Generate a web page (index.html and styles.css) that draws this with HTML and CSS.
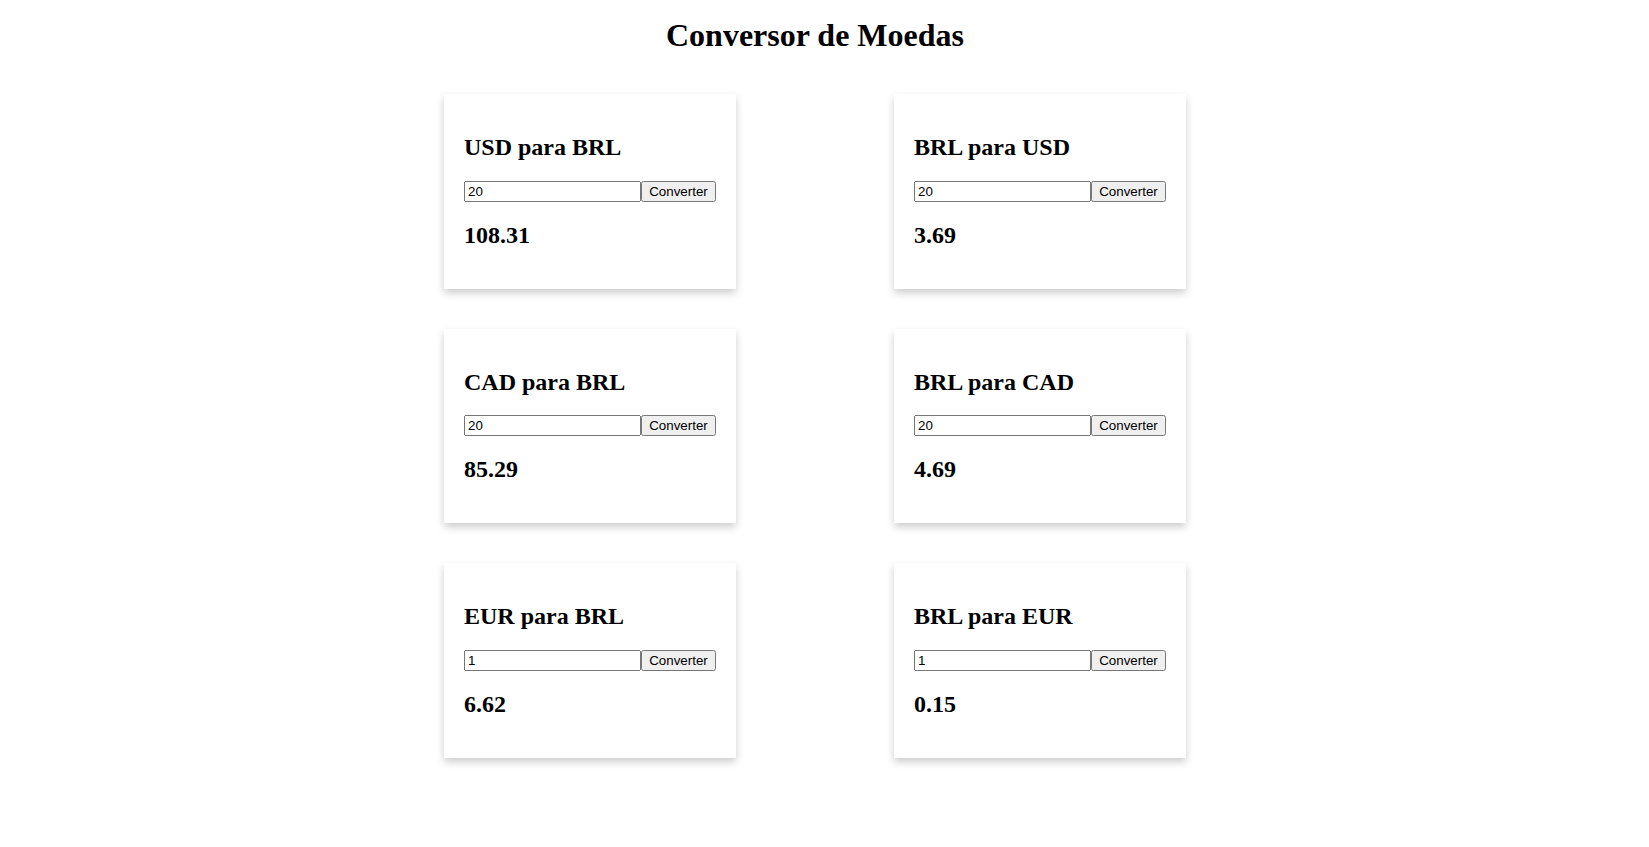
FILE: index.html
```html
<!DOCTYPE html>
<html lang="pt-BR">
<head>
<meta charset="utf-8">
<title>Conversor de Moedas</title>
<link rel="stylesheet" href="styles.css">
</head>
<body>
<h1 class="title">Conversor de Moedas</h1>
<div class="grid">
  <div class="card">
    <h2 class="card-title">USD para BRL</h2>
    <div class="row"><input class="amount" type="text" value="20"><button class="btn">Converter</button></div>
    <h2 class="result">108.31</h2>
  </div>
  <div class="card">
    <h2 class="card-title">BRL para USD</h2>
    <div class="row"><input class="amount" type="text" value="20"><button class="btn">Converter</button></div>
    <h2 class="result">3.69</h2>
  </div>
  <div class="card">
    <h2 class="card-title">CAD para BRL</h2>
    <div class="row"><input class="amount" type="text" value="20"><button class="btn">Converter</button></div>
    <h2 class="result">85.29</h2>
  </div>
  <div class="card">
    <h2 class="card-title">BRL para CAD</h2>
    <div class="row"><input class="amount" type="text" value="20"><button class="btn">Converter</button></div>
    <h2 class="result">4.69</h2>
  </div>
  <div class="card">
    <h2 class="card-title">EUR para BRL</h2>
    <div class="row"><input class="amount" type="text" value="1"><button class="btn">Converter</button></div>
    <h2 class="result">6.62</h2>
  </div>
  <div class="card">
    <h2 class="card-title">BRL para EUR</h2>
    <div class="row"><input class="amount" type="text" value="1"><button class="btn">Converter</button></div>
    <h2 class="result">0.15</h2>
  </div>
</div>
</body>
</html>
```
FILE: styles.css
```css
html, body {
  background: #fff;
}
body {
  margin: 0 19px 0 0;
  font-family: "Liberation Serif", "Times New Roman", serif;
  color: #000;
}
.title {
  font-size: 32px;
  font-weight: bold;
  text-align: center;
  margin: 17px 0 0;
}
.grid {
  display: grid;
  grid-template-columns: 292px 292px;
  column-gap: 158px;
  row-gap: 40px;
  justify-content: center;
  margin-top: 40px;
  padding-bottom: 40px;
}
.card {
  background: #fff;
  padding: 20px;
  box-shadow: 0 4px 8px 0 rgba(0, 0, 0, 0.2);
}
.card-title, .result {
  font-size: 24px;
  font-weight: bold;
  margin: 19.92px 0;
}
.row {
  display: flex;
  align-items: stretch;
}
.amount {
  font-family: "Liberation Sans", Arial, sans-serif;
  font-size: 13.333px;
  width: 177px;
  box-sizing: border-box;
  height: 21px;
  margin: 0;
}
.btn {
  font-family: "Liberation Sans", Arial, sans-serif;
  font-size: 13.333px;
  width: 75px;
  height: 21px;
  box-sizing: border-box;
  margin: 0;
}
```
